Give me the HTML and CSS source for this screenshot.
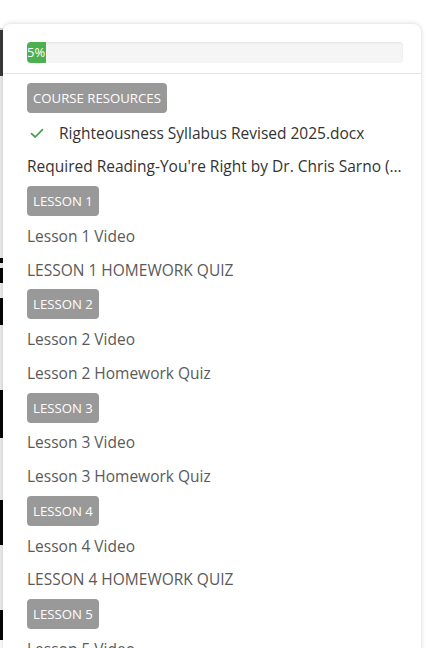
FILE: index.html
```html
<!DOCTYPE html>
<html lang="en">
<head>
<meta charset="utf-8">
<title>Course outline</title>
<link rel="stylesheet" href="styles.css">
</head>
<body>
  <div class="backdrop">
    <div class="seg seg-white" style="height:28px"></div>
    <div class="seg seg-line" style="height:2px"></div>
    <div class="seg seg-dark" style="height:46px"></div>
    <div class="seg seg-light" style="height:182px"></div>
    <div class="seg seg-black" style="height:5px"></div>
    <div class="seg seg-light" style="height:5px"></div>
    <div class="seg seg-black" style="height:15px"></div>
    <div class="seg seg-light" style="height:15px"></div>
    <div class="seg seg-black" style="height:27px"></div>
    <div class="seg seg-light" style="height:65px"></div>
    <div class="seg seg-black" style="height:48px"></div>
    <div class="seg seg-light" style="height:62px"></div>
    <div class="seg seg-black" style="height:45px"></div>
    <div class="seg seg-light" style="height:65px"></div>
    <div class="seg seg-black" style="height:30px"></div>
  </div>

  <div class="panel">
    <div class="panel-head">
      <div class="progress">
        <div class="progress-bar" style="width:5%">5%</div>
      </div>
    </div>

    <ul class="outline">
      <li class="badge">COURSE RESOURCES</li>
      <li class="item item-dark done">
        <svg class="check" viewBox="0 0 16 16" width="16" height="16" aria-hidden="true">
          <path d="M2.5 8.6 L6.2 12 L13.5 4.6" fill="none" stroke="#43a047" stroke-width="1.7" stroke-linecap="round" stroke-linejoin="round"/>
        </svg>
        <span>Righteousness Syllabus Revised 2025.docx</span>
      </li>
      <li class="item item-dark"><span class="clip">Required Reading-You're Right by Dr. Chris Sarno (Amazon.com link)</span></li>

      <li class="badge">LESSON 1</li>
      <li class="item">Lesson 1 Video</li>
      <li class="item">LESSON 1 HOMEWORK QUIZ</li>

      <li class="badge">LESSON 2</li>
      <li class="item">Lesson 2 Video</li>
      <li class="item">Lesson 2 Homework Quiz</li>

      <li class="badge">LESSON 3</li>
      <li class="item">Lesson 3 Video</li>
      <li class="item">Lesson 3 Homework Quiz</li>

      <li class="badge">LESSON 4</li>
      <li class="item">Lesson 4 Video</li>
      <li class="item">LESSON 4 HOMEWORK QUIZ</li>

      <li class="badge">LESSON 5</li>
      <li class="item">Lesson 5 Video</li>
      <li class="item">Lesson 5 Homework Quiz</li>
    </ul>
  </div>
</body>
</html>
```

FILE: styles.css
```css
* { box-sizing: border-box; }

html, body {
  margin: 0;
  height: 100%;
  background: #fff;
  overflow: hidden;
}

body {
  display: flex;
  align-items: flex-start;
  font-family: "Open Sans", "Noto Sans", sans-serif;
}

/* sliver of the page underneath the dropdown */
.backdrop {
  width: 3px;
  flex: none;
  display: flex;
  flex-direction: column;
}
.seg { flex: none; }
.seg-white { background: #fff; }
.seg-line { background: #d9d9d9; }
.seg-dark { background: #3a3a3a; }
.seg-light { background: #ececec; }
.seg-black { background: #050505; }

/* dropdown panel */
.panel {
  flex: none;
  width: 418px;
  margin-top: 24px;
  height: 700px;
  background: #fff;
  border-radius: 8px;
  box-shadow: 0 0 5px rgba(0, 0, 0, 0.18);
}

.panel-head {
  padding: 18px 18px 10px 24px;
  border-bottom: 1px solid #e3e3e3;
}

.progress {
  height: 21px;
  background: #f5f5f5;
  border-radius: 4px;
  box-shadow: inset 0 1px 2px rgba(0, 0, 0, 0.08);
  overflow: hidden;
}

.progress-bar {
  height: 100%;
  background: #4cb050;
  color: #fff;
  font-size: 13px;
  line-height: 21px;
  white-space: nowrap;
}

.outline {
  list-style: none;
  margin: 0;
  padding: 6px 18px 0 24px;
}

.badge {
  display: block;
  width: fit-content;
  height: 30px;
  margin: 3px 0;
  padding: 0 6px;
  background: #999;
  color: #fff;
  border-radius: 4px;
  font-size: 13.2px;
  line-height: 30px;
}

.item {
  display: flex;
  align-items: center;
  height: 33.6px;
  font-size: 15.5px;
  color: #5a5a5a;
  white-space: nowrap;
}

.item-dark { color: #333; }

.done { padding-left: 2px; }
.check { margin-right: 14px; flex: none; }

.clip {
  display: block;
  overflow: hidden;
  text-overflow: ellipsis;
  min-width: 0;
}
```
